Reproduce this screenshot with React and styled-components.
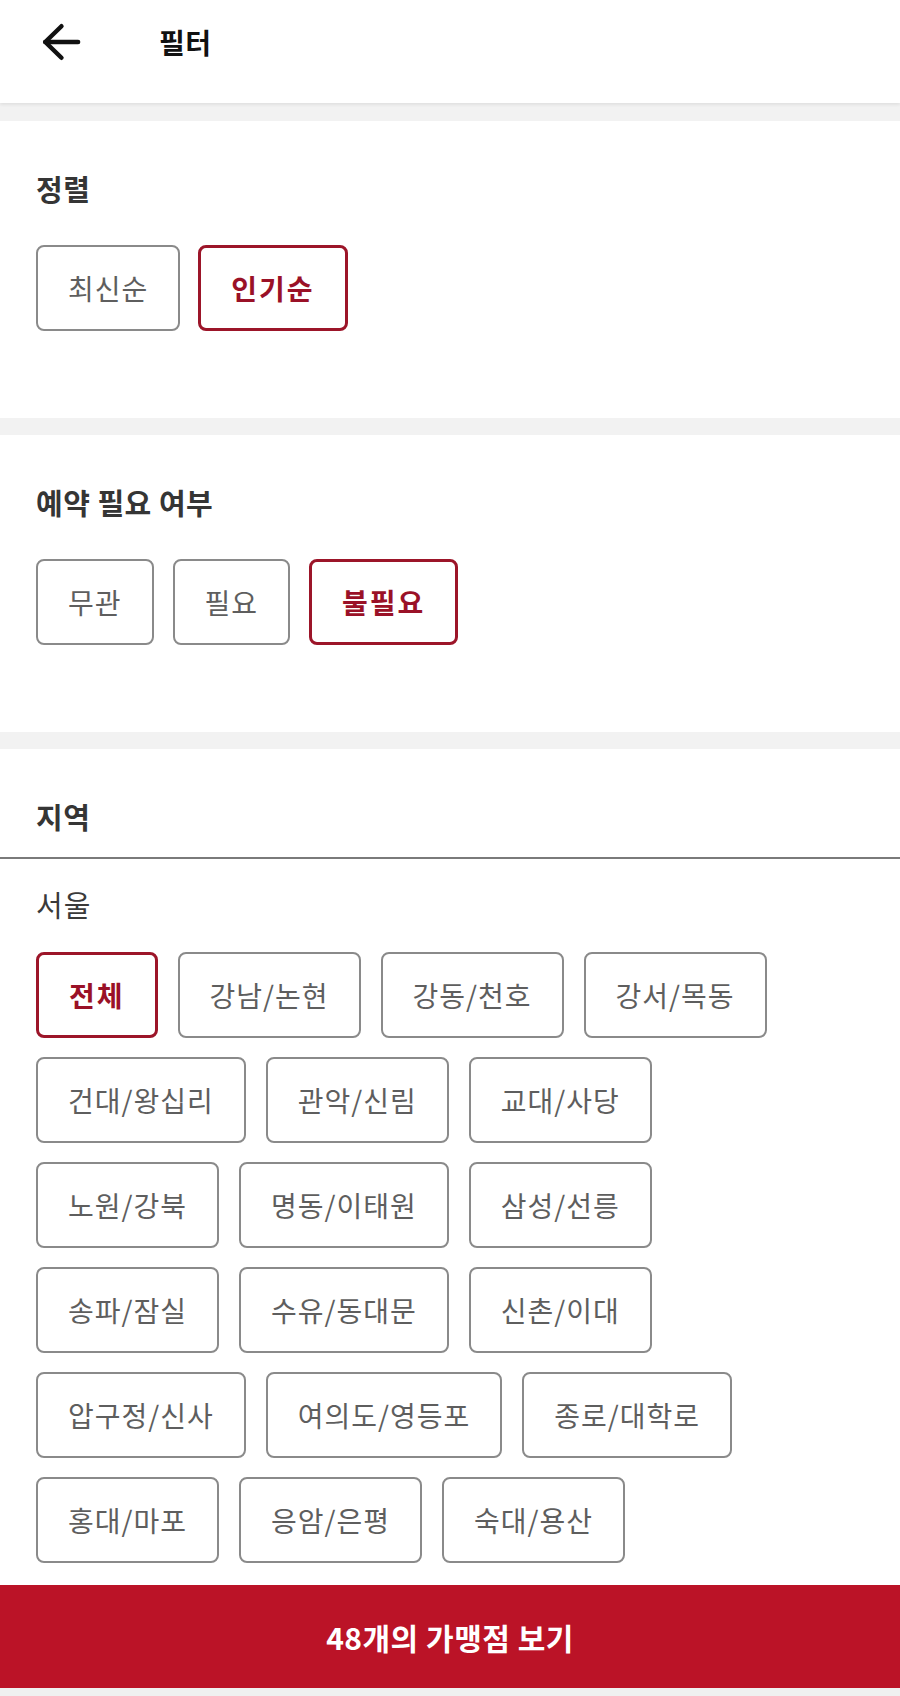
import React, { useState } from "react";
import styled, { createGlobalStyle } from "styled-components";

const GlobalStyle = createGlobalStyle`
  * { box-sizing: border-box; }
  html, body { margin: 0; padding: 0; background: #f2f2f2; }
  body { font-family: "Noto Sans CJK KR", "Noto Sans", sans-serif; }
`;

const Page = styled.div`
  width: 900px;
  min-height: 1696px;
  background: #f2f2f2;
  display: flex;
  flex-direction: column;
`;

const Header = styled.header`
  height: 103px;
  background: #fff;
  padding-bottom: 19px;
  box-shadow: 0 2px 3px rgba(0, 0, 0, 0.07);
  position: relative;
  z-index: 1;
`;

const HeaderRow = styled.div`
  height: 84px;
  display: flex;
  align-items: center;
  padding-left: 34px;
`;

const BackButton = styled.button`
  width: 54px;
  height: 54px;
  padding: 0;
  border: 0;
  background: none;
  display: flex;
  align-items: center;
  justify-content: center;
  color: #111;
`;

const HeaderTitle = styled.h1`
  margin: 0 0 0 71px;
  font-size: 28px;
  line-height: 40px;
  font-weight: 700;
  color: #111;
  letter-spacing: 0.5px;
`;

const Section = styled.section`
  background: #fff;
  margin-top: ${(p) => p.$gap}px;
  padding: ${(p) => (p.$flush ? "47px 0 0" : "47px 36px 87px")};
`;

const SectionTitle = styled.h2`
  margin: 0;
  font-size: 29px;
  line-height: 40px;
  font-weight: 700;
  letter-spacing: 0.5px;
  color: #353535;
  padding: ${(p) => (p.$inset ? "0 36px" : "0")};
`;

const Divider = styled.div`
  margin-top: 21px;
  height: 2px;
  background: #7a7a7a;
`;

const RegionBody = styled.div`
  padding: 25px 36px 22px;
`;

const SubTitle = styled.div`
  font-size: 29px;
  line-height: 40px;
  letter-spacing: 1px;
  color: #3a3a3a;
`;

const OptionRow = styled.div`
  margin-top: ${(p) => p.$top}px;
  display: flex;
  flex-wrap: wrap;
  column-gap: ${(p) => p.$col}px;
  row-gap: 19px;
  max-width: ${(p) => (p.$max ? `${p.$max}px` : "none")};
`;

const Chip = styled.button`
  height: 86px;
  padding: 0 30px;
  border: ${(p) => (p.$on ? "3px solid #9c1529" : "2px solid #8a8a8a")};
  border-radius: 8px;
  background: #fff;
  color: ${(p) => (p.$on ? "#9a1127" : "#5e5e5e")};
  font-family: "Noto Sans CJK KR", "Noto Sans", sans-serif;
  font-size: 28px;
  letter-spacing: ${(p) => (p.$on ? 2 : 1)}px;
  font-weight: ${(p) => (p.$on ? 700 : 400)};
  line-height: 1;
  display: flex;
  align-items: center;
  justify-content: center;
  white-space: nowrap;
  cursor: pointer;
`;

const SubmitButton = styled.button`
  height: 103px;
  width: 100%;
  border: 0;
  background: #bb1327;
  color: #fff;
  font-family: "Noto Sans CJK KR", "Noto Sans", sans-serif;
  font-size: 30px;
  letter-spacing: 0.5px;
  font-weight: 700;
  display: flex;
  align-items: center;
  justify-content: center;
  cursor: pointer;
`;

const BottomStrip = styled.div`
  height: 8px;
  background: #f0f0f0;
`;

const ArrowIcon = () => (
  <svg width="54" height="54" viewBox="0 0 24 24" fill="none" stroke="currentColor"
    strokeWidth="2" strokeLinecap="round" strokeLinejoin="round">
    <path d="M12.2 19 5 12l7.2-7" />
    <path d="M19.6 12H5" />
  </svg>
);

const regions = [
  "전체", "강남/논현", "강동/천호", "강서/목동",
  "건대/왕십리", "관악/신림", "교대/사당",
  "노원/강북", "명동/이태원", "삼성/선릉",
  "송파/잠실", "수유/동대문", "신촌/이대",
  "압구정/신사", "여의도/영등포", "종로/대학로",
  "홍대/마포", "응암/은평", "숙대/용산",
];

export default function App() {
  const [sort, setSort] = useState("인기순");
  const [reserve, setReserve] = useState("불필요");
  const [region, setRegion] = useState("전체");

  return (
    <Page>
      <GlobalStyle />
      <Header>
        <HeaderRow>
          <BackButton aria-label="뒤로">
            <ArrowIcon />
          </BackButton>
          <HeaderTitle>필터</HeaderTitle>
        </HeaderRow>
      </Header>

      <Section $gap={18}>
        <SectionTitle>정렬</SectionTitle>
        <OptionRow $top={37} $col={18}>
          {["최신순", "인기순"].map((s) => (
            <Chip key={s} $on={sort === s} onClick={() => setSort(s)}>{s}</Chip>
          ))}
        </OptionRow>
      </Section>

      <Section $gap={17}>
        <SectionTitle>예약 필요 여부</SectionTitle>
        <OptionRow $top={37} $col={19}>
          {["무관", "필요", "불필요"].map((s) => (
            <Chip key={s} $on={reserve === s} onClick={() => setReserve(s)}>{s}</Chip>
          ))}
        </OptionRow>
      </Section>

      <Section $gap={17} $flush>
        <SectionTitle $inset>지역</SectionTitle>
        <Divider />
        <RegionBody>
          <SubTitle>서울</SubTitle>
          <OptionRow $top={28} $col={20} $max={790}>
            {regions.map((r) => (
              <Chip key={r} $on={region === r} onClick={() => setRegion(r)}>{r}</Chip>
            ))}
          </OptionRow>
        </RegionBody>
      </Section>

      <SubmitButton>48개의 가맹점 보기</SubmitButton>
      <BottomStrip />
    </Page>
  );
}
